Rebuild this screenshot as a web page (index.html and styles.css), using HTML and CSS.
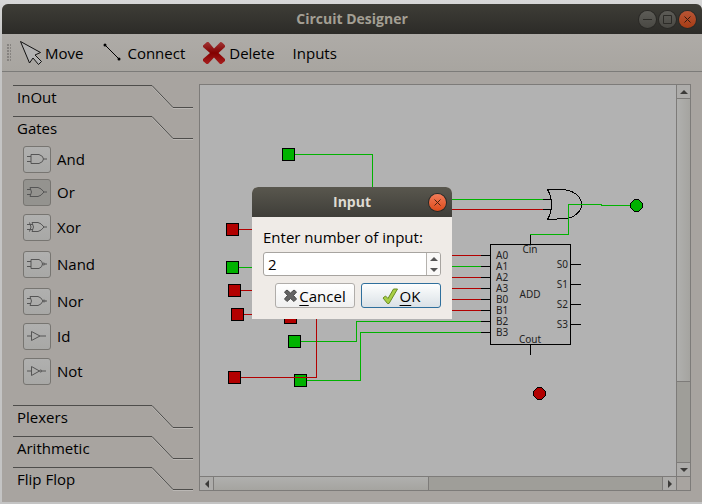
FILE: index.html
```html
<!DOCTYPE html>
<html lang="en">
<head>
<meta charset="utf-8">
<title>Circuit Designer</title>
<link rel="stylesheet" href="styles.css">
</head>
<body>
<main class="window">
  <header class="titlebar">
    <h1 class="title">Circuit Designer</h1>
    <div class="window-buttons">
      <button class="round" aria-label="Minimize"><svg viewBox="0 0 17 17"><path d="M4 8.500h9"/></svg></button>
      <button class="round" aria-label="Maximize"><svg viewBox="0 0 17 17"><path d="M4.500 4.500h8v8h-8z"/></svg></button>
      <button class="round close" aria-label="Close"><svg viewBox="0 0 17 17"><path d="M5.500 5.500l6 6M11.500 5.500l-6 6"/></svg></button>
    </div>
  </header>

  <nav class="toolbar">
    <span class="grip"></span>
    <button class="tool">
      <svg class="tool-icon" viewBox="0 0 24 24"><path d="M1.500 .500L21.500 11.500 16 14 22.500 20.500 19.500 23.500 14 17 10.500 22z" fill="#b2b2b2" stroke="#111"/></svg>Move</button>
    <button class="tool">
      <svg class="tool-icon" viewBox="0 0 24 24"><path d="M4 4L18 18" stroke="#000"/><circle cx="4" cy="4" r="1.500"/><circle cx="18" cy="18" r="1.500"/></svg>Connect</button>
    <button class="tool">
      <svg class="tool-icon" viewBox="0 0 24 24"><defs><linearGradient id="red" x1="0" y1="0" x2="0" y2="1"><stop offset="0" stop-color="#a03535"/><stop offset=".5" stop-color="#820000"/><stop offset="1" stop-color="#a81f1f"/></linearGradient></defs><path d="M5.500 1L11 7.500 17.500 1Q19 .500 22 4.500V6L15.500 12 22 18V20L18.500 23H17L11 16.500 5 23H3.500L0 20V18L7 12 0 6V4.500L4 1z" fill="url(#red)"/></svg>Delete</button>
    <button class="tool">Inputs</button>
  </nav>

  <div class="content">
    <aside class="toolbox">
      <button class="tab"><span>InOut</span><svg class="tab-edge" viewBox="0 0 41 24"><path d="M0 1.500L21 23.500H41" stroke="#bbb8b5"/><path d="M0 .500L21 22.500H41" stroke="#4e4d4b"/></svg></button>
      <button class="tab"><span>Gates</span><svg class="tab-edge" viewBox="0 0 41 24"><path d="M0 1.500L21 23.500H41" stroke="#bbb8b5"/><path d="M0 .500L21 22.500H41" stroke="#4e4d4b"/></svg></button>
      <div class="gates">
        <div class="gate"><button id="and"><svg viewBox="0 0 20 16"><path d="M4 3.500H12Q16.500 5 16.500 8T12 12.500H4zM0 5.500H4M0 10.500H4M16.500 8H20"/></svg></button><label for="and">And</label></div>
        <div class="gate"><button id="or" class="pressed"><svg viewBox="0 0 20 16"><path d="M3 3.500H11Q14 4 17 8 14 12 11 12.500H3Q6 8 3 3.500M0 5.500H4M0 10.500H4M17 8H20"/></svg></button><label for="or">Or</label></div>
        <div class="gate"><button id="xor"><svg viewBox="0 0 20 16"><path d="M5 3.500H11Q14 4 17 8 14 12 11 12.500H5Q8 8 5 3.500M2.500 3.500Q5.500 8 2.500 12.500M0 5.500H6M0 10.500H6M17 8H20"/></svg></button><label for="xor">Xor</label></div>
        <div class="gate"><button id="nand"><svg viewBox="0 0 20 16"><path d="M4 3.500H12Q15.500 5 15.500 8T12 12.500H4zM0 5.500H4M0 10.500H4M18 8H20"/><circle cx="16.800" cy="8" r="1"/></svg></button><label for="nand">Nand</label></div>
        <div class="gate"><button id="nor"><svg viewBox="0 0 20 16"><path d="M3 3.500H11Q14 4 16 8 14 12 11 12.500H3Q6 8 3 3.500M0 5.500H4M0 10.500H4M18 8H20"/><circle cx="17" cy="8" r="1"/></svg></button><label for="nor">Nor</label></div>
        <div class="gate"><button id="id"><svg viewBox="0 0 20 16"><path d="M4.500 3.500V12.500L13 8zM0 8H4M13 8H19"/></svg></button><label for="id">Id</label></div>
        <div class="gate"><button id="not"><svg viewBox="0 0 20 16"><path d="M4.500 3.500V12.500L12.500 8zM0 8H4M15 8H19"/><circle cx="13.700" cy="8" r="1"/></svg></button><label for="not">Not</label></div>
      </div>
      <button class="tab"><span>Plexers</span><svg class="tab-edge" viewBox="0 0 41 24"><path d="M0 1.500L21 23.500H41" stroke="#bbb8b5"/><path d="M0 .500L21 22.500H41" stroke="#4e4d4b"/></svg></button>
      <button class="tab"><span>Arithmetic</span><svg class="tab-edge" viewBox="0 0 41 24"><path d="M0 1.500L21 23.500H41" stroke="#bbb8b5"/><path d="M0 .500L21 22.500H41" stroke="#4e4d4b"/></svg></button>
      <button class="tab"><span>Flip Flop</span><svg class="tab-edge" viewBox="0 0 41 24"><path d="M0 1.500L21 23.500H41" stroke="#bbb8b5"/><path d="M0 .500L21 22.500H41" stroke="#4e4d4b"/></svg></button>
    </aside>

    <section class="scroll-area">
      <div class="canvas">
        <svg class="circuit" viewBox="200 85 476 391">
          <g class="on node">
            <path d="M282.500 148.500h12v12h-12zM226.500 261.500h12v12h-12zM288.500 335.500h12v12h-12zM294.500 374.500h12v12h-12z"/>
            <path d="M634.500 199.500h4l4 4v4l-4 4h-4l-4-4v-4z"/>
          </g>
          <g class="off node">
            <path d="M226.500 223.500h12v12h-12zM228.500 284.500h12v12h-12zM231.500 308.500h12v12h-12zM284.500 311.500h12v12h-12zM228.500 371.500h12v12h-12z"/>
            <path d="M537.500 387.500h4l4 4v4l-4 4h-4l-4-4v-4z"/>
          </g>
          <g class="part">
            <path d="M547 189.500H562C574 190 581.500 197 581.500 204.500S574 217 568 218.500L547 219.500M547.500 189.500Q556 204.500 547.500 219.500M543 199.500H552M543 209.500H552"/>
            <path d="M490.500 244.500h80v100h-80z"/>
            <path d="M481 255.500h9M481 266.500h9M481 277.500h9M481 288.500h9M481 299.500h9M481 310.500h9M481 321.500h9M481 332.500h9"/>
            <path d="M571 264.500h10M571 284.500h10M571 304.500h10M571 324.500h10M530.500 235v9M530.500 345v10"/>
          </g>
          <path class="wire-on" d="M295 154.500H372.500V199.500H543M239 267.500H300M301 341.500H356.500V321.500H481M307 380.500H360.500V332.500H481M440 266.500H481M630 205.500H601.500V204.500H568.500V234.500H530"/>
          <path class="wire-off" d="M239 229.500H300M241 290.500H300M244 314.500H300M241 377.500H316.500V300M440 209.500H543M440 255.500H481M440 277.500H481M440 288.500H481M440 299.500H481M440 310.500H481"/>
          <g class="pin-names">
            <text x="496" y="259">A0</text><text x="496" y="270">A1</text><text x="496" y="281">A2</text><text x="496" y="292">A3</text>
            <text x="496" y="303">B0</text><text x="496" y="314">B1</text><text x="496" y="325">B2</text><text x="496" y="336">B3</text>
            <g text-anchor="end"><text x="568" y="268">S0</text><text x="568" y="288">S1</text><text x="568" y="308">S2</text><text x="568" y="328">S3</text></g>
            <g text-anchor="middle"><text x="530" y="253">Cin</text><text x="530" y="298">ADD</text><text x="530" y="343">Cout</text></g>
          </g>
        </svg>
      </div>
      <div class="scrollbar vertical">
        <button aria-label="Scroll up"><svg viewBox="0 0 8 8"><path d="M0 6L4 2 8 6z"/></svg></button>
        <div class="track"><div class="thumb"></div></div>
        <button aria-label="Scroll down"><svg viewBox="0 0 8 8"><path d="M0 2L4 6 8 2z"/></svg></button>
      </div>
      <div class="scrollbar horizontal">
        <button aria-label="Scroll left"><svg viewBox="0 0 8 8"><path d="M6 0L2 4 6 8z"/></svg></button>
        <div class="track"><div class="thumb"></div></div>
        <button aria-label="Scroll right"><svg viewBox="0 0 8 8"><path d="M2 0L6 4 2 8z"/></svg></button>
      </div>
      <div class="corner"></div>
    </section>
  </div>

  <dialog class="dialog" open aria-labelledby="dialog-title">
    <header class="dialog-bar">
      <h2 class="title" id="dialog-title">Input</h2>
      <button class="round close" aria-label="Close"><svg viewBox="0 0 17 17"><path d="M5.500 5.500l6 6M11.500 5.500l-6 6"/></svg></button>
    </header>
    <form class="dialog-form">
      <label for="count">Enter number of input:</label>
      <div class="spinbox">
        <input id="count" type="text" inputmode="numeric" value="2">
        <div class="steps">
          <button type="button" aria-label="Increase"><svg viewBox="0 0 8 4"><path d="M0 4L4 0 8 4z"/></svg></button>
          <button type="button" aria-label="Decrease"><svg viewBox="0 0 8 4"><path d="M0 0L4 4 8 0z"/></svg></button>
        </div>
      </div>
      <div class="actions">
        <button type="button" class="action"><svg class="cross" viewBox="0 0 13 13"><path d="M3 1L6.500 4 10 1 12.500 3 9.500 6.500 12.500 10 10 12.500 6.500 9.500 3 12.500 .500 10 3.500 6.500 .500 3z" fill="#646464" stroke="#484848"/></svg><span><u>C</u>ancel</span></button>
        <button type="button" class="action default"><svg class="check" viewBox="0 0 16 16"><path d="M1 10L3.500 8 6 10.500 11.500 1H15.500L7 15.500H5.500z" fill="#a8cf45" stroke="#688b22"/></svg><span><u>O</u>K</span></button>
      </div>
    </form>
  </dialog>
</main>
</body>
</html>
```
FILE: styles.css
```css
* { box-sizing: border-box; }

body {
  margin: 0;
  min-height: 100vh;
  padding: 4px 0 2px 2px;
  display: flex;
  background: linear-gradient(#d8d8d8, #c4c4c4 40px);
  color: #000;
  font: 15px/20px "Open Sans", "Noto Sans", sans-serif;
}

button, input { font: inherit; color: inherit; margin: 0; padding: 0; border: 0; background: none; }
svg { display: block; fill: none; }

.window {
  position: relative;
  flex: 1;
  min-width: 0;
  display: flex;
  flex-direction: column;
  background: #a8a4a0;
  border-radius: 6px 6px 0 0;
}

.titlebar, .dialog-bar {
  position: relative;
  display: flex;
  align-items: center;
  justify-content: center;
  height: 30px;
  border-radius: 6px 6px 0 0;
  background: linear-gradient(#3e3d37, #2c2b28);
  color: #a39f94;
}
.title { margin: 0; font-size: 14px; line-height: 20px; font-weight: 700; }
.window-buttons { position: absolute; right: 6px; display: flex; gap: 3px; }

.round {
  width: 17px;
  height: 17px;
  border-radius: 50%;
  background: linear-gradient(#5d5c57, #494843);
  box-shadow: 0 0 0 1px #2a2926;
  stroke: #2c2b27;
}
.round.close { background: linear-gradient(#b95535, #a63c15); stroke: #33190e; }

.toolbar {
  display: flex;
  align-items: center;
  gap: 18px;
  height: 38px;
  padding-left: 5px;
  border-bottom: 1px solid #7c7b79;
  background: linear-gradient(#aeaba7, #a8a5a0);
}
.grip {
  width: 4px;
  height: 17px;
  margin-right: -10px;
  background: radial-gradient(circle at 1px 1px, #868380 1px, transparent 1px) 0 0 / 3px 3px;
}
.tool { display: flex; align-items: center; gap: 2px; }
.tool-icon { width: 24px; height: 24px; }
.tool-icon circle { fill: #000; }

.content { flex: 1; display: flex; gap: 6px; padding: 12px 11px 11px; }

.toolbox { width: 180px; display: flex; flex-direction: column; gap: 7px; padding-top: 1px; }
.tab { display: flex; height: 24px; text-align: left; }
.tab span {
  flex: 1;
  height: 24px;
  padding: 1px 0 0 4px;
  border-top: 1px solid #4e4d4b;
}
.tab-edge { width: 41px; height: 24px; }

.gates {
  flex: 1;
  display: grid;
  grid-template-rows: 32px 34px 36px 38px 36px 34px 36px;
  margin: -5px 0 -1px;
  padding: 1px 0 0 10px;
}
.gate { display: flex; align-items: center; gap: 6px; }
.gate button {
  display: grid;
  place-items: center;
  width: 28px;
  height: 27px;
  border: 1px solid #777571;
  border-radius: 3px;
  background: linear-gradient(#b0b0af, #a8a8a6);
}
.gate .pressed { background: #94938f; }
.gate svg { width: 20px; height: 16px; stroke: #555; stroke-width: 1; }

.content { padding-bottom: 11px; }
.scroll-area {
  flex: 1;
  min-width: 0;
  display: grid;
  grid-template: minmax(0, 1fr) 14px / minmax(0, 1fr) 14px;
  border: 1px solid #7d7b79;
}
.canvas { overflow: hidden; background: #b2b2b2; }
.circuit { width: 476px; height: 391px; shape-rendering: crispEdges; }
.node { stroke: #000; }
.on { fill: #00b200; }
.off { fill: #b20000; }
.part { stroke: #000; }
.wire-on { stroke: #00b200; }
.wire-off { stroke: #b20000; }
.pin-names { fill: #222; font-family: "Noto Sans", sans-serif; font-size: 10px; }

.scrollbar { display: flex; background: #9f9e99; }
.scrollbar button { display: grid; place-items: center; flex: 0 0 13px; background: #adacaa; }
.scrollbar svg { width: 8px; height: 8px; fill: #3c3b39; }
.track { flex: 1; display: flex; }
.vertical, .vertical .track { flex-direction: column; }
.vertical { border-left: 1px solid #7d7b79; }
.horizontal { border-top: 1px solid #7d7b79; }
.corner { border: solid #7d7b79; border-width: 1px 0 0 1px; }
.vertical .track { border: solid #7d7b79; border-width: 1px 0; }
.horizontal .track { border: solid #7d7b79; border-width: 0 1px; }
.thumb { background: #adacaa; }
.vertical .thumb { height: 78%; border-bottom: 1px solid #7d7b79; background: linear-gradient(90deg, #b0b0ae, #a5a4a0); }
.horizontal .thumb { width: 48%; border-right: 1px solid #7d7b79; background: linear-gradient(#b0b0ae, #a5a4a0); }

.dialog {
  position: absolute;
  inset: 0;
  margin: auto;
  width: 200px;
  height: fit-content;
  padding: 0;
  border: 0;
  border-radius: 6px 6px 0 0;
  background: #efebe7;
  color: #000;
}
.dialog-bar { background: linear-gradient(#59574e, #3f3e39); color: #dfdbd2; }
.dialog-bar .round { position: absolute; right: 6px; background: linear-gradient(#f37c59, #dc4b1b); stroke: #4a2110; }
.dialog-form { display: flex; flex-direction: column; padding: 10px 11px 11px; }

.spinbox {
  display: flex;
  height: 24px;
  margin: 5px 0 7px;
  border: 1px solid #a7a4a0;
  border-radius: 3px;
  background: #fff;
  overflow: hidden;
}
.spinbox input { flex: 1; min-width: 0; padding-left: 4px; outline: 0; }
.steps { width: 14px; display: grid; border-left: 1px solid #b5b2ae; background: #faf9f8; }
.steps button { display: grid; place-items: center; }
.steps svg { width: 8px; height: 4px; fill: #555; }

.actions { display: flex; justify-content: flex-end; gap: 6px; }
.action {
  display: flex;
  align-items: center;
  justify-content: center;
  gap: 2px;
  width: 80px;
  height: 25px;
  border: 1px solid #b0adaa;
  border-radius: 3px;
  background: linear-gradient(#fff, #f0f0f0);
}
.default { border-color: #2f6f9c; background: linear-gradient(#fdfefe, #dae1e6); }
.action u { text-underline-offset: 3px; }
.cross { width: 13px; height: 13px; }
.check { width: 16px; height: 16px; }
```
